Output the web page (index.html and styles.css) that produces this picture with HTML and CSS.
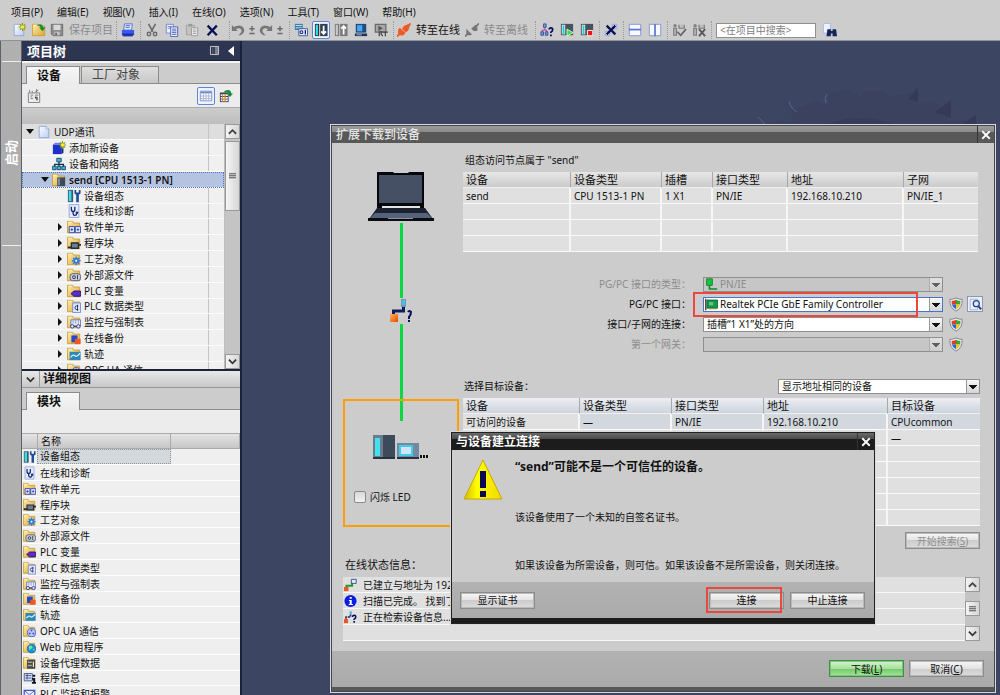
FILE: index.html
```html
<!DOCTYPE html>
<html lang="zh-CN">
<head>
<meta charset="utf-8">
<title>UDP通讯</title>
<link rel="stylesheet" href="styles.css">
</head>
<body>
<svg class="defs" aria-hidden="true">
  <defs>
    <linearGradient id="gFolder" x1="0" y1="0" x2="1" y2="1"><stop offset="0" stop-color="#ffefa8"/><stop offset="1" stop-color="#dca436"/></linearGradient>
    <linearGradient id="gPage" x1="0" y1="0" x2="1" y2="1"><stop offset="0" stop-color="#fff"/><stop offset="1" stop-color="#b9cdf5"/></linearGradient>
    <linearGradient id="gWarn" x1="0" y1="0" x2="1" y2="0"><stop offset="0" stop-color="#d8b800"/><stop offset=".35" stop-color="#ffff00"/><stop offset="1" stop-color="#f0d800"/></linearGradient>
    <linearGradient id="gOrange" x1="0" y1="0" x2="1" y2="1"><stop offset="0" stop-color="#ffb35c"/><stop offset="1" stop-color="#e84a00"/></linearGradient>
  </defs>
  <symbol id="folder" viewBox="0 0 16 16"><path d="M.500 1.500h6l1 2h7v11H.500z" fill="url(#gFolder)" stroke="#c99a3a" stroke-width="1"/><path d="M1.500 2.500h4" stroke="#fff6cc"/></symbol>
  <symbol id="page" viewBox="0 0 16 16"><path d="M2.500 1.500h8l3 3v10h-11z" fill="url(#gPage)" stroke="#8ea4d8"/><path d="M10.500 1.500v3h3" fill="#fff" stroke="#8ea4d8"/></symbol>
  <symbol id="spark" viewBox="0 0 16 16"><path d="M12 0v9M7.500 4.500h9M9 1.500l6 6M15 1.500l-6 6" stroke="#7f9a00" stroke-width="1.200"/><circle cx="12" cy="4.500" r="2" fill="#ffee22"/></symbol>
  <symbol id="box" viewBox="0 0 16 16"><path d="M1 4h10v11H1z" fill="#1c2fd0"/><path d="M1 4l3-2h9l-2 2z" fill="#6a7cf0"/><path d="M11 4l2-2v11l-2 2z" fill="#0a1878"/></symbol>
  <symbol id="net" viewBox="0 0 16 16"><path d="M8 5v4M3 11V8.500h10V11M8 8v4" stroke="#1a2f55" fill="none" stroke-width="1.500"/><path d="M5.500 1.500h5v4h-5zM.700 10.500h4v4h-4zM6 10.500h4v4H6zM11.300 10.500h4v4h-4z" fill="#2fc4d8" stroke="#1a3a66"/></symbol>
  <symbol id="plc" viewBox="0 0 16 16"><path d="M6 5h9v10H6z" fill="#3c4a5c"/><path d="M7 6h2v8H7z" fill="#8395a8"/></symbol>
  <symbol id="config" viewBox="0 0 16 16"><path d="M1 1h6v14H1z" fill="#41566c"/><path d="M2 2h3v12H2z" fill="#35e0e8"/><path d="M8.500 1v4l2 1.500V15h3V6.500l2-1.500V1h-2v3h-3V1z" fill="#1d4c98"/></symbol>
  <symbol id="steth" viewBox="0 0 16 16"><path d="M2.500.500h11v15h-11z" fill="#e3ebff" stroke="#8fa2dc"/><path d="M5 3v3q0 2.500 2 2.500T9 6V3M7 8.500V11q0 2 2 2t2-2" fill="none" stroke="#16266e" stroke-width="1.500"/><circle cx="11.300" cy="10" r="1.500" fill="#16266e"/></symbol>
  <symbol id="oUnits" viewBox="0 0 16 16"><path d="M2.500 7.500h6v7h-6zM9.500 7.500h6v7h-6z" fill="#dfe6ff" stroke="#2a3da8"/><path d="M4 11h3M5.500 9.500v3M11 11h3M12.500 9.500v3" stroke="#2a3da8"/></symbol>
  <symbol id="oBlock" viewBox="0 0 16 16"><path d="M5 8h8v6H5z" fill="#6e7f92" stroke="#222f40" stroke-width="1.500"/><path d="M1 13h4M13 10h3" stroke="#222f40" stroke-width="2"/></symbol>
  <symbol id="oGear" viewBox="0 0 16 16"><circle cx="10.500" cy="10" r="3.200" fill="#2a7be0"/><path d="M10.500 5v10M5.500 10h10M7 6.500l7 7M14 6.500l-7 7" stroke="#2a7be0" stroke-width="1.500"/><circle cx="10.500" cy="10" r="1.200" fill="#fff"/></symbol>
  <symbol id="oSrc" viewBox="0 0 16 16"><rect x="3.500" y="6.500" width="12" height="8" rx="3" fill="#c9cede" stroke="#4d566e"/><circle cx="8" cy="10.500" r="1.700" fill="none" stroke="#222b45"/><path d="M12 8v5" stroke="#222b45"/></symbol>
  <symbol id="oTag" viewBox="0 0 16 16"><path d="M4.500 11l3.500-3h7.500v6H8z" fill="#5b2fc4" stroke="#2a1170"/></symbol>
  <symbol id="oType" viewBox="0 0 16 16"><path d="M6.500 4.500h9v11h-9z" fill="#dfe7ff" stroke="#6e86c8"/><path d="M13 8q-4-1-4 2t4 2M12 6.500v7" fill="none" stroke="#24306c"/></symbol>
  <symbol id="oWatch" viewBox="0 0 16 16"><path d="M4.500 5.500h11v7h-11z" fill="#e8edff" stroke="#6274b8"/><path d="M7 6v4M10 6v4M13 6v4" stroke="#8694c8"/><circle cx="6" cy="13" r="2" fill="#dfe6ff" stroke="#28357c"/><circle cx="13" cy="13" r="2" fill="#dfe6ff" stroke="#28357c"/><path d="M8 13h3" stroke="#28357c"/></symbol>
  <symbol id="oBackup" viewBox="0 0 16 16"><path d="M5 5h7v8H5z" fill="#2646cc"/><path d="M9 9h6.500v6H9z" fill="#f0561d"/></symbol>
  <symbol id="oTrace" viewBox="0 0 16 16"><path d="M3 5.500h12.500v9.500H3z" fill="#2c86b8"/><path d="M4 12q3-4 5-2t6-3" fill="none" stroke="#e4f8ff" stroke-width="1.300"/></symbol>
  <symbol id="oOpc" viewBox="0 0 16 16"><circle cx="10.500" cy="10" r="5" fill="#bcc9ff" stroke="#3d54c8"/><circle cx="10.500" cy="7.500" r="1.200" fill="#3d54c8"/><circle cx="8.300" cy="11" r="1.200" fill="#3d54c8"/><circle cx="12.700" cy="11" r="1.200" fill="#3d54c8"/></symbol>
  <symbol id="oWeb" viewBox="0 0 16 16"><circle cx="10.500" cy="10" r="5.200" fill="#1597d4" stroke="#0c5b9c"/><path d="M7 8q2-3 4-1t-1 3-1 3q-2-1-2-5M12 11l2-1v3z" fill="#6ee0c0"/></symbol>
  <symbol id="oProxy" viewBox="0 0 16 16"><path d="M5 4h10v11H5z" fill="#3f4650"/><path d="M6.500 6h1.500v2H6.500zM9 6h1.500v2H9zM6.500 10h1.500v2H6.500zM9 10h1.500v2H9zM12 6h1.500v7H12z" fill="#f5e6a8"/></symbol>
  <symbol id="info" viewBox="0 0 16 16"><path d="M1.500 2.500h10v9h-10z" fill="#d7e0fa" stroke="#33467e"/><path d="M3 5h7M3 8h7M5 3v7" stroke="#33467e"/><path d="M12 4h3v2.500h-3zM11 8h4v5h1v2h-5v-2h1.500V10H11z" fill="#101628"/></symbol>
  <symbol id="alarm" viewBox="0 0 16 16"><path d="M1.500 3.500h13v10h-13z" fill="#e9eeff" stroke="#3b55cc" stroke-width="1.500"/><path d="M2 4l6 5 6-5" fill="none" stroke="#3b55cc"/></symbol>
  <symbol id="save" viewBox="0 0 16 16"><path d="M1.500 1.500h13v13h-11l-2-2z" fill="#8d8d8d" stroke="#696969"/><path d="M4 2h8v6H4z" fill="#d9d9d9"/><path d="M5 10h6v4H5z" fill="#c2c2c2"/><path d="M6 11h2v3H6z" fill="#666"/></symbol>
  <symbol id="print" viewBox="0 0 16 16"><path d="M4 1h9l-1 7H3z" fill="#dfe8ff" stroke="#5670c8"/><path d="M5.500 3h5M5 5h5" stroke="#4a63c4"/><path d="M1 8h14v5l-2 2H2l-1-2z" fill="#3a5ae8"/><path d="M1 12h14l-2 3H3z" fill="#1d2fae"/></symbol>
  <symbol id="cut" viewBox="0 0 16 16"><path d="M4 1l5 9M12 1L7 10" stroke="#6a6a6a" stroke-width="1.800"/><circle cx="4.500" cy="12.500" r="2" fill="none" stroke="#6a6a6a" stroke-width="1.600"/><circle cx="11.500" cy="12.500" r="2" fill="none" stroke="#6a6a6a" stroke-width="1.600"/></symbol>
  <symbol id="copy" viewBox="0 0 16 16"><path d="M1.500 1.500h8v10h-8z" fill="#eef2ff" stroke="#6a80cc"/><path d="M3 4h4M3 6h4" stroke="#6a80cc"/><path d="M6.500 4.500h8v11h-8z" fill="#eef2ff" stroke="#4159b4"/><path d="M8 7h5M8 9h5M8 11h5M8 13h5" stroke="#4159b4"/></symbol>
  <symbol id="paste" viewBox="0 0 16 16"><path d="M1.500 2.500h9v11h-9z" fill="#c2c2c2" stroke="#a0a0a0"/><path d="M4 1h4v3H4z" fill="#999"/><path d="M7.500 5.500h7v9h-7z" fill="#ececec" stroke="#969696"/><path d="M9 8h4M9 10h4M9 12h4" stroke="#999"/></symbol>
  <symbol id="del" viewBox="0 0 16 16"><path d="M3 3l10.500 11M13.500 3L3 14" stroke="#0a1058" stroke-width="2.600"/></symbol>
  <symbol id="undo" viewBox="0 0 16 16"><path d="M1 2v7h7L5.500 7q5-2.500 6.500 1 0 4-4 6h3q5-3 4-7-3-7-12-2.500z" fill="#777"/></symbol>
  <symbol id="pm" viewBox="0 0 10 16"><path d="M5 3.500v6M2 6.500h6M2 12h6" stroke="#6c6c6c" stroke-width="1.700"/></symbol>
  <symbol id="compile" viewBox="0 0 16 16"><path d="M1 1h9v7H1z" fill="#3f7fae"/><path d="M2 2.500h7v1H2zM2 5h7v1H2z" fill="#e8f4ff"/><path d="M5.500 6.500h10v8h-10z" fill="#e2ebff" stroke="#3353a0"/><circle cx="8.500" cy="10.500" r="1.600" fill="none" stroke="#14276a" stroke-width="1.200"/><path d="M13 8v5" stroke="#14276a" stroke-width="1.500"/></symbol>
  <symbol id="down" viewBox="0 0 16 16"><path d="M1 1h5v14H1z" fill="#28343f"/><path d="M2 2h2.500v12H2z" fill="#36dfe4"/><path d="M7 1h8.500v14H7z" fill="#32404d"/><path d="M11 3v9M8.300 9.500L11 12.500l2.700-3" stroke="#fff" stroke-width="2" fill="none"/></symbol>
  <symbol id="up" viewBox="0 0 16 16"><path d="M1 1h5v14H1z" fill="#777"/><path d="M2 2h2.500v12H2z" fill="#c8c8c8"/><path d="M7 1h8.500v14H7z" fill="#7a7a7a"/><path d="M11 4v9M8.300 6.500L11 3.500l2.700 3" stroke="#fff" stroke-width="2" fill="none"/></symbol>
  <symbol id="sim" viewBox="0 0 16 16"><path d="M2 1h12v10H2z" fill="#214b86"/><path d="M3.500 2.500h6v7h-6z" fill="#4aa8e8"/><path d="M1 12h14v3H1z" fill="#1f3358"/><path d="M3 13.500h6" stroke="#8fd0ff"/></symbol>
  <symbol id="rt" viewBox="0 0 16 16"><path d="M1.500 1.500h12v9h-12z" fill="#a7a7a7" stroke="#6c6c6c" stroke-width="1.500"/><path d="M5 3l5 3-5 3z" fill="#555"/><path d="M6 15v-5h3l-1 2.500L10 15M10.500 10.500H16M13 10.500V15" fill="none" stroke="#444" stroke-width="1.400"/></symbol>
  <symbol id="plug" viewBox="0 0 16 16"><path d="M0 15.500l3-3M12.500 3.500l3-3" stroke="currentColor" stroke-width="2.200"/><path d="M2 13.500q-2-5 1-8l2.500 1.500q2-4.500 6-5l1-1 2.500 2.500-1 1q0 4-4.500 6.500l-.500 1.500q-3 3-7 1z" fill="currentColor"/><path d="M5 6.500l4.500 4.500" stroke="#fff" stroke-opacity=".6"/></symbol>
  <symbol id="unplug" viewBox="0 0 16 16"><path d="M0 15.500l3-3M13 3.500l3-3" stroke="#777" stroke-width="2"/><path d="M1.500 13V6.500L8 13q-3 2-6.500 0zM7 6.500L12 2q3 2 2 7h-4z" fill="#777"/></symbol>
  <symbol id="netq" viewBox="0 0 16 16"><path d="M4 1h3v4H4zM1 10h3v4H1zM6 10h3v4H6z" fill="#2fb8cc" stroke="#5b3aa0"/><path d="M5.500 5v3M2.500 10V8h5v2" stroke="#a03ca8" fill="none"/><path d="M10.500 7.500q0-2 2-2t2 2-2 3v1M12.500 13v2" stroke="#0a1058" stroke-width="2" fill="none"/></symbol>
  <symbol id="station" viewBox="0 0 16 16"><path d="M1 1h14v13H1z" fill="#46525e"/><path d="M2 2h4v11H2z" fill="#d5e6ee"/><path d="M3 3h2v10H3z" fill="#2cc8d0"/></symbol>
  <symbol id="play" viewBox="0 0 16 16"><path d="M8 7l7 4-7 4z" fill="#2fe04a" stroke="#dfffe2"/></symbol>
  <symbol id="stop" viewBox="0 0 16 16"><path d="M8.500 8.500h6v6h-6z" fill="#f21414" stroke="#fff"/></symbol>
  <symbol id="delx" viewBox="0 0 16 16"><path d="M9.500 1.500h5v5h-5zM1.500 9.500h5v5h-5z" fill="#e5ecff" stroke="#8ba0dc"/><path d="M3 3l10 10M13 3L3 13" stroke="#0a1058" stroke-width="2.600"/></symbol>
  <symbol id="splitH" viewBox="0 0 16 16"><path d="M1.500 1.500h13v13h-13z" fill="#f7f9ff" stroke="#7b92da"/><path d="M1 7.500h14" stroke="#5d78cc" stroke-width="2"/></symbol>
  <symbol id="splitV" viewBox="0 0 16 16"><path d="M1.500 1.500h13v13h-13z" fill="#f7f9ff" stroke="#7b92da"/><path d="M8 1v14" stroke="#5d78cc" stroke-width="2"/></symbol>
  <symbol id="modGrey" viewBox="0 0 16 16"><circle cx="3.500" cy="3" r="2" fill="#858585"/><path d="M2 6h3v8H2zM8 2v4h6V2" fill="#bdbdbd" stroke="#7a7a7a" stroke-width="1.300"/></symbol>
  <symbol id="find" viewBox="0 0 16 16"><path d="M.500.500h8v11h-8z" fill="#edf2ff" stroke="#a7b7e2"/><path d="M5 7h4v8H4zM11 7h4l1 8h-5zM8 9h4v3H8z" fill="#14255e"/></symbol>
  <symbol id="grid" viewBox="0 0 16 16"><path d="M1.500 2.500h13v11h-13z" fill="#fff" stroke="#7488c4"/><path d="M2 4h12" stroke="#7488c4" stroke-width="2"/><path d="M5 5v8M8 5v8M11 5v8M2 8h12M2 11h12" stroke="#a3b0d6"/></symbol>
  <symbol id="gridGo" viewBox="0 0 16 16"><path d="M1 4h10v11H1z" fill="#34406c"/><path d="M2 6h8v2H2zM2 9h8v2H2zM2 12h8v2H2z" fill="#fff"/><path d="M4 6v8M7 6v8" stroke="#e08b1e" stroke-width="1.500"/><path d="M5 4q2-4 7-2.500 2 1 2 3.500h2l-3.500 4L9 5h2q0-2-6-1z" fill="#168a34"/></symbol>
  <symbol id="cfgGrey" viewBox="0 0 16 16"><path d="M1.500 4.500h13v11h-13z" fill="#ececec" stroke="#777"/><path d="M4 7h3M4 9h2M4 11h3M9 7h4M9 9h2v4M12 9v4M3 1v3M6 2v2M11 0v4M13 1l-4 3" stroke="#777"/></symbol>
  <symbol id="redgreen" viewBox="0 0 16 16"><path d="M3 13V9h7V4" stroke="#1b9c34" fill="none" stroke-width="2.400"/><path d="M9 1h6v5H9z" fill="#e1ebff" stroke="#243d7e"/><path d="M0 10.500h5.500v5H0z" fill="#f0551c"/></symbol>
  <symbol id="infoDot" viewBox="0 0 16 16"><circle cx="8" cy="8" r="7.500" fill="#0b1be6"/><path d="M7 3h2.500v2.300H7zM6 6.700h3.500v5H11V13H5.700v-1.300H7V8H6z" fill="#fff"/></symbol>
  <symbol id="seek" viewBox="0 0 16 16"><path d="M0 10.500h5v5H0z" fill="#f0551c"/><path d="M2.500 10V8h5.500V5" stroke="#1b2c66" fill="none" stroke-width="2" stroke-dasharray="3 1"/><path d="M7 1h2.500v4H7z" fill="#54a8d8"/><path d="M10.500 8q0-2.200 2-2.200t2 2-2 3v1M12.500 13v2" stroke="#0a1058" stroke-width="2" fill="none"/></symbol>
  <symbol id="shield" viewBox="0 0 16 16"><path d="M8 .500q4 1.800 7 1.600.600 10-7 13.400Q.400 12.100 1 2.100 4 2.300 8 .500z" fill="#e6e9eb" stroke="#777f88"/><path d="M8 2.500Q5.500 3.800 3 4l.3 4H8z" fill="#e0401c"/><path d="M8 2.500Q10.500 3.800 13 4l-.3 4H8z" fill="#3aa536"/><path d="M3.300 8H8v5.500Q4 11.500 3.300 8z" fill="#2866d4"/><path d="M12.700 8H8v5.500Q12 11.500 12.700 8z" fill="#f4c51e"/></symbol>
  <symbol id="magnify" viewBox="0 0 16 16"><path d="M1.500 1.500h9v13h-9z" fill="#edf2ff" stroke="#98aadc"/><circle cx="9" cy="7" r="3.700" fill="#d9ebff" stroke="#2c3f86" stroke-width="1.500"/><path d="M11.500 10l3.500 4" stroke="#2c3f86" stroke-width="2.400"/></symbol>
  <symbol id="pnie" viewBox="0 0 16 16"><path d="M2 1h7v8H2z" fill="#12c83a" stroke="#077a20"/><path d="M5.500 9v4.500H15" stroke="#0a8a26" stroke-width="2" fill="none"/></symbol>
  <symbol id="nic" viewBox="0 0 16 16"><path d="M1 1v14" stroke="#222" stroke-width="1.500"/><path d="M2.500 2.500h13v10h-13z" fill="#179a48" stroke="#07552a"/><path d="M5 5h5v4H5z" fill="#62c88a"/><path d="M5 13.500h9" stroke="#c3a128"/></symbol>
  <symbol id="chevU" viewBox="0 0 10 10"><path d="M1 7.500L5 3.500 9 7.500" fill="none" stroke="#444" stroke-width="2"/></symbol>
  <symbol id="chevD" viewBox="0 0 10 10"><path d="M1 3L5 7 9 3" fill="none" stroke="#333" stroke-width="2"/></symbol>
  <symbol id="close" viewBox="0 0 12 12"><path d="M1.500 1.500l9 9M10.500 1.500l-9 9" stroke="#fff" stroke-width="2.200"/></symbol>
</svg>

<div class="app">
  <header class="top">
    <nav class="menubar" aria-label="菜单">
      <button>项目(P)</button><button>编辑(E)</button><button>视图(V)</button><button>插入(I)</button><button>在线(O)</button><button>选项(N)</button><button>工具(T)</button><button>窗口(W)</button><button>帮助(H)</button>
    </nav>
    <div class="toolbar" role="toolbar" aria-label="工具栏">
      <button class="tb" aria-label="新建"><svg><use href="#page"/><use href="#spark"/></svg></button>
      <button class="tb" aria-label="打开"><svg viewBox="0 0 16 16"><use href="#folder"/><path d="M5 3q6-4 8 2h2.500L12 9.500 8 5h2q-1-3-5-2z" fill="#16902f"/></svg></button>
      <button class="tb tb-text off save"><svg><use href="#save"/></svg>保存项目</button>
      <i class="sep"></i>
      <button class="tb" aria-label="打印"><svg><use href="#print"/></svg></button>
      <i class="sep"></i>
      <button class="tb" aria-label="剪切"><svg><use href="#cut"/></svg></button>
      <button class="tb" aria-label="复制"><svg><use href="#copy"/></svg></button>
      <button class="tb" aria-label="粘贴"><svg><use href="#paste"/></svg></button>
      <button class="tb" aria-label="删除"><svg><use href="#del"/></svg></button>
      <i class="sep wide"></i>
      <button class="tb half" aria-label="撤销"><svg><use href="#undo"/></svg></button>
      <button class="tb half" aria-label="撤销列表"><svg class="pm"><use href="#pm"/></svg></button>
      <button class="tb half flip" aria-label="重做"><svg><use href="#undo"/></svg></button>
      <button class="tb half" aria-label="重做列表"><svg class="pm"><use href="#pm"/></svg></button>
      <i class="sep"></i>
      <button class="tb" aria-label="编译"><svg><use href="#compile"/></svg></button>
      <button class="tb active" aria-label="下载到设备"><svg><use href="#down"/></svg></button>
      <button class="tb" aria-label="从设备上传"><svg><use href="#up"/></svg></button>
      <button class="tb" aria-label="启动仿真"><svg><use href="#sim"/></svg></button>
      <button class="tb" aria-label="启动运行系统"><svg><use href="#rt"/></svg></button>
      <i class="sep"></i>
      <button class="tb tb-text online"><svg><use href="#plug"/></svg>转至在线</button>
      <button class="tb tb-text off offline"><svg><use href="#unplug"/></svg>转至离线</button>
      <i class="sep wide"></i>
      <button class="tb" aria-label="可访问的设备"><svg><use href="#netq"/></svg></button>
      <button class="tb" aria-label="启动 CPU"><svg><use href="#station"/><use href="#play"/></svg></button>
      <button class="tb" aria-label="停止 CPU"><svg><use href="#station"/><use href="#stop"/></svg></button>
      <i class="sep"></i>
      <button class="tb" aria-label="交叉引用"><svg><use href="#delx"/></svg></button>
      <i class="sep"></i>
      <button class="tb" aria-label="水平拆分"><svg><use href="#splitH"/></svg></button>
      <button class="tb" aria-label="垂直拆分"><svg><use href="#splitV"/></svg></button>
      <i class="sep"></i>
      <button class="tb" aria-label="接受"><svg viewBox="0 0 16 16"><use href="#modGrey"/><path d="M6 10l4 4 6-7" fill="none" stroke="#666" stroke-width="2"/></svg></button>
      <button class="tb" aria-label="取消"><svg viewBox="0 0 16 16"><use href="#modGrey"/><path d="M8 7l7 8M15 7l-7 8" stroke="#555" stroke-width="2"/></svg></button>
      <i class="sep"></i>
      <input class="search" type="text" placeholder="&lt;在项目中搜索&gt;" aria-label="在项目中搜索">
      <button class="tb" aria-label="搜索"><svg><use href="#find"/></svg></button>
    </div>
  </header>

  <div class="main">
    <div class="rail"><button class="rail-tab"><span>启动</span></button></div>

    <aside class="side">
      <div class="side-title"><h2>项目树</h2><svg class="dock" viewBox="0 0 10 10"><path d="M.500.500h9v9h-9z" fill="#7c8193" stroke="#c7cad6"/><path d="M2 1v8M4.500 1v8" stroke="#20263c" stroke-width="1.500"/></svg><svg class="fold" viewBox="0 0 6 10"><path d="M6 0v10L0 5z" fill="#fff"/></svg></div>
      <div class="tabs"><button class="tab on">设备</button><button class="tab">工厂对象</button></div>
      <div class="side-tools">
        <button class="tb first" aria-label="组态"><svg><use href="#cfgGrey"/></svg></button>
        <button class="tb active" aria-label="概览"><svg><use href="#grid"/></svg></button>
        <button class="tb" aria-label="转到"><svg><use href="#gridGo"/></svg></button>
      </div>
      <div class="blank"></div>
      <div class="tree-box">
        <ul class="tree">
          <li class="l0 root"><i class="tw open"></i><svg><use href="#page"/></svg><span>UDP通讯</span></li>
          <li class="l1"><i class="tw"></i><svg><use href="#box"/><use href="#spark"/></svg><span>添加新设备</span></li>
          <li class="l1"><i class="tw"></i><svg><use href="#net"/></svg><span>设备和网络</span></li>
          <li class="l1 sel"><i class="tw open"></i><svg><use href="#folder"/><use href="#plc"/></svg><span>send [CPU 1513-1 PN]</span></li>
          <li class="l2"><i class="tw"></i><svg><use href="#config"/></svg><span>设备组态</span></li>
          <li class="l2"><i class="tw"></i><svg><use href="#steth"/></svg><span>在线和诊断</span></li>
          <li class="l2"><i class="tw shut"></i><svg><use href="#folder"/><use href="#oUnits"/></svg><span>软件单元</span></li>
          <li class="l2"><i class="tw shut"></i><svg><use href="#folder"/><use href="#oBlock"/></svg><span>程序块</span></li>
          <li class="l2"><i class="tw shut"></i><svg><use href="#folder"/><use href="#oGear"/></svg><span>工艺对象</span></li>
          <li class="l2"><i class="tw shut"></i><svg><use href="#folder"/><use href="#oSrc"/></svg><span>外部源文件</span></li>
          <li class="l2"><i class="tw shut"></i><svg><use href="#folder"/><use href="#oTag"/></svg><span>PLC 变量</span></li>
          <li class="l2"><i class="tw shut"></i><svg><use href="#folder"/><use href="#oType"/></svg><span>PLC 数据类型</span></li>
          <li class="l2"><i class="tw shut"></i><svg><use href="#folder"/><use href="#oWatch"/></svg><span>监控与强制表</span></li>
          <li class="l2"><i class="tw shut"></i><svg><use href="#folder"/><use href="#oBackup"/></svg><span>在线备份</span></li>
          <li class="l2"><i class="tw shut"></i><svg><use href="#folder"/><use href="#oTrace"/></svg><span>轨迹</span></li>
          <li class="l2"><i class="tw shut"></i><svg><use href="#folder"/><use href="#oOpc"/></svg><span>OPC UA 通信</span></li>
        </ul>
        <div class="scroll">
          <button aria-label="向上"><svg><use href="#chevU"/></svg></button>
          <div class="thumb"><i class="grip"></i></div>
          <button class="end" aria-label="向下"><svg><use href="#chevD"/></svg></button>
        </div>
      </div>
      <div class="detail-title"><svg><use href="#chevD"/></svg><h2>详细视图</h2></div>
      <div class="tabs detail-tabs"><button class="tab on">模块</button></div>
      <div class="side-tools"></div>
      <div class="list-head"><span></span><span>名称</span><span></span></div>
      <ul class="list">
        <li class="sel"><svg><use href="#config"/></svg><span>设备组态</span></li>
        <li><svg><use href="#steth"/></svg><span>在线和诊断</span></li>
        <li><svg><use href="#folder"/><use href="#oUnits"/></svg><span>软件单元</span></li>
        <li><svg><use href="#folder"/><use href="#oBlock"/></svg><span>程序块</span></li>
        <li><svg><use href="#folder"/><use href="#oGear"/></svg><span>工艺对象</span></li>
        <li><svg><use href="#folder"/><use href="#oSrc"/></svg><span>外部源文件</span></li>
        <li><svg><use href="#folder"/><use href="#oTag"/></svg><span>PLC 变量</span></li>
        <li><svg><use href="#folder"/><use href="#oType"/></svg><span>PLC 数据类型</span></li>
        <li><svg><use href="#folder"/><use href="#oWatch"/></svg><span>监控与强制表</span></li>
        <li><svg><use href="#folder"/><use href="#oBackup"/></svg><span>在线备份</span></li>
        <li><svg><use href="#folder"/><use href="#oTrace"/></svg><span>轨迹</span></li>
        <li><svg><use href="#folder"/><use href="#oOpc"/></svg><span>OPC UA 通信</span></li>
        <li><svg><use href="#folder"/><use href="#oWeb"/></svg><span>Web 应用程序</span></li>
        <li><svg><use href="#folder"/><use href="#oProxy"/></svg><span>设备代理数据</span></li>
        <li><svg><use href="#info"/></svg><span>程序信息</span></li>
        <li><svg><use href="#alarm"/></svg><span>PLC 监控和报警</span></li>
      </ul>
    </aside>

    <main class="desk">
      <svg class="gear" viewBox="0 0 260 60" aria-hidden="true">
        <path d="M10 60L18 50 40 43 54 46 50 34 75 24 88 29 88 18 108 12 122 20 124 14 142 14 150 20 172 15 178 26 194 24 210 38 208 44 236 42 236 60z" fill="#3a425f"/>
        <path d="M64 60q55-38 115 0z" fill="#363c59"/>
        <path d="M168 22l10-12v15zM195 35l16-12v18zM218 50l18-12v16z" fill="#353b57"/>
        <path d="M18 40q6 8 14 11M49 24q1 7 8 11M87 17q-3 4-1 9" fill="none" stroke="#52658d"/>
      </svg>

      <section class="win" aria-label="扩展下载到设备">
        <div class="win-title"><h1>扩展下载到设备</h1><button class="x" aria-label="关闭"><svg><use href="#close"/></svg></button></div>
        <div class="win-body">
          <div class="topo">
            <svg class="laptop" viewBox="0 0 66 50"><path d="M9 0h16l1 1h14l1-1h15v36H9z" fill="#05070a"/><path d="M11 3h43v28H11z" fill="#465064"/><path d="M14 34h38v2H14z" fill="#dfe3ea"/><path d="M9 36h48l8 11H1z" fill="#1c222d"/><path d="M7 41h52l6 6H1z" fill="#56627a"/><path d="M0 46h66v3H0z" fill="#0a0c10"/><path d="M20 46h25v1H20z" fill="#8792a5"/></svg>
            <i class="wire"></i>
            <svg class="link" viewBox="0 0 24 24"><path d="M12 0h5v8h-5z" fill="#7c93b0"/><path d="M13 1h3v5h-3z" fill="#3cc6ea"/><path d="M14.500 8v4H4.500v3" fill="none" stroke="#101c58" stroke-width="3"/><path d="M1 15h8v8H1z" fill="url(#gOrange)"/><path d="M19 13q1-2 3 0 0 3-2 5v2M20 21v2" fill="none" stroke="#0a1058" stroke-width="2"/></svg>
            <i class="wire"></i>
            <div class="target">
              <i class="wire stub"></i>
              <svg class="devices" viewBox="0 0 56 26"><path d="M0 0h22v24H0z" fill="#3d4a5a"/><path d="M0 0h10v24H0z" fill="#6a7c90"/><path d="M2 3h5v18H2z" fill="#43e2ea"/><path d="M0 22h22v2H0zM24 22h22v2H24z" fill="#28323e"/><path d="M24 8h22v14H24z" fill="#7488a0"/><path d="M26 10h14v11H26z" fill="#3ecfe6"/><path d="M28 12h10v7H28z" fill="#d3e4ff"/><path d="M47 20h2v3h-2zM50 20h2v3h-2zM53 20h2v3h-2z" fill="#111"/></svg>
              <label class="check"><input type="checkbox">闪烁 LED</label>
            </div>
          </div>

          <div class="form-col">
            <h3>组态访问节点属于 "send"</h3>
            <table class="grid t1">
              <thead><tr><th>设备</th><th>设备类型</th><th>插槽</th><th>接口类型</th><th>地址</th><th>子网</th></tr></thead>
              <tbody>
                <tr><td>send</td><td>CPU 1513-1 PN</td><td>1 X1</td><td>PN/IE</td><td>192.168.10.210</td><td>PN/IE_1</td></tr>
                <tr><td></td><td></td><td></td><td></td><td></td><td></td></tr>
                <tr><td></td><td></td><td></td><td></td><td></td><td></td></tr>
                <tr><td></td><td></td><td></td><td></td><td></td><td></td></tr>
              </tbody>
            </table>
            <div class="fields">
              <label class="dim" for="f1">PG/PC 接口的类型：</label>
              <div class="combo dis icon"><select id="f1" disabled><option>PN/IE</option></select><svg class="lead"><use href="#pnie"/></svg></div><span></span><span></span>
              <label for="f2">PG/PC 接口：</label>
              <div class="combo icon focus"><select id="f2"><option>Realtek PCIe GbE Family Controller</option></select><svg class="lead"><use href="#nic"/></svg><i class="mark"></i></div><svg class="sh"><use href="#shield"/></svg><button class="mag" aria-label="搜索接口"><svg><use href="#magnify"/></svg></button>
              <label for="f3">接口/子网的连接：</label>
              <div class="combo"><select id="f3"><option>插槽“1 X1”处的方向</option></select></div><svg class="sh"><use href="#shield"/></svg><span></span>
              <label class="dim" for="f4">第一个网关：</label>
              <div class="combo dis"><select id="f4" disabled><option></option></select></div><svg class="sh"><use href="#shield"/></svg><span></span>
            </div>
            <div class="pick">
              <label for="f5">选择目标设备：</label>
              <div class="combo"><select id="f5"><option>显示地址相同的设备</option></select></div>
            </div>
            <table class="grid t2">
              <thead><tr><th>设备</th><th>设备类型</th><th>接口类型</th><th>地址</th><th>目标设备</th></tr></thead>
              <tbody>
                <tr class="cur"><td>可访问的设备</td><td>—</td><td>PN/IE</td><td>192.168.10.210</td><td>CPUcommon</td></tr>
                <tr><td></td><td></td><td></td><td></td><td>—</td></tr>
                <tr><td></td><td></td><td></td><td></td><td></td></tr>
                <tr><td></td><td></td><td></td><td></td><td></td></tr>
                <tr><td></td><td></td><td></td><td></td><td></td></tr>
                <tr><td></td><td></td><td></td><td></td><td></td></tr>
                <tr><td></td><td></td><td></td><td></td><td></td></tr>
              </tbody>
            </table>
            <div class="right"><button class="btn" disabled>开始搜索(<u>S</u>)</button></div>
          </div>
        </div>

        <div class="status">
          <h3>在线状态信息：</h3>
          <div class="log-box">
            <ul class="log">
              <li><svg><use href="#redgreen"/></svg>已建立与地址为 192.</li>
              <li><svg><use href="#infoDot"/></svg>扫描已完成。 找到了</li>
              <li><svg><use href="#seek"/></svg>正在检索设备信息...</li>
              <li></li>
            </ul>
            <div class="scroll">
              <button aria-label="向上"><svg><use href="#chevU"/></svg></button>
              <div class="thumb small"><i class="grip"></i></div>
              <button class="end" aria-label="向下"><svg><use href="#chevD"/></svg></button>
            </div>
          </div>
        </div>
        <footer class="win-foot"><button class="btn go">下载(<u>L</u>)</button><button class="btn">取消(<u>C</u>)</button></footer>
      </section>

      <section class="win msg" role="dialog" aria-label="与设备建立连接">
        <div class="win-title"><h1>与设备建立连接</h1><button class="x" aria-label="关闭"><svg><use href="#close"/></svg></button></div>
        <div class="msg-body">
          <svg class="warn" viewBox="0 0 40 42"><path d="M20 1L39 40H1z" fill="url(#gWarn)" stroke="#c8a800"/><path d="M17 12h6v17h-6zM17 32h6v6h-6z" fill="#0a0a50"/></svg>
          <div class="msg-text">
            <h2>“send”可能不是一个可信任的设备。</h2>
            <p>该设备使用了一个未知的自签名证书。</p>
            <p>如果该设备为所需设备，则可信。如果该设备不是所需设备，则关闭连接。</p>
          </div>
        </div>
        <footer class="msg-foot"><button class="btn cert">显示证书</button><span class="marked"><button class="btn">连接</button><i class="mark"></i></span><button class="btn">中止连接</button></footer>
      </section>
    </main>
  </div>
</div>
</body>
</html>
```
FILE: styles.css
```css
* { box-sizing: border-box; }
html, body { height: 100%; margin: 0; }
body {
  font: 10px/16px "Noto Sans", "Noto Sans CJK SC", sans-serif;
  color: #111;
  overflow: hidden;
  background: #cccccc;
}
button, input, select { font: inherit; color: inherit; margin: 0; }
button { padding: 0; border: 0; background: none; white-space: nowrap; }
h1, h2, h3, p, ul { margin: 0; padding: 0; font-size: inherit; font-weight: normal; }
ul { list-style: none; }
svg { display: block; flex: none; width: 14px; height: 14px; overflow: visible; }
.defs { position: absolute; width: 0; height: 0; }

.app { display: flex; flex-direction: column; height: 100vh; }

/* Menu and toolbar */
.top { background: #cdcdcd; border-bottom: 1px solid #8d9399; }
.menubar { display: flex; gap: 14px; height: 20px; padding: 3px 0 0 11px; }
.toolbar { display: flex; align-items: center; height: 20px; padding-left: 9px; }
.tb { display: flex; align-items: center; justify-content: center; width: 20px; height: 18px; flex: none; }
.tb svg { width: 14px; height: 14px; }
.tb svg.pm { width: 10px; }
.tb-text { width: auto; font-size: 11px; gap: 5px; }
.save { padding: 0 1px; }
.online { padding-left: 2px; }
.offline { padding-left: 5px; }
.online svg { color: #ee5a24; }
.off { color: #8a8a8a; }
.half { width: 14px; }
.flip svg { transform: scaleX(-1); }
.active { width: 18px; margin: 0 1px; border: 1px solid #5c86d6; border-radius: 2px; background: #eef3ff; }
.sep { width: 1px; height: 18px; margin: 0 1px 0 2px; border-left: 1px dotted #9c9c9c; flex: none; }
.sep.wide { margin-left: 7px; }
.search { width: 100px; height: 15px; margin: 0 4px 0 3px; padding: 0 3px; border: 1px solid #8f8f8f; background: #fff; }
.search::placeholder { color: #808080; opacity: 1; }

.main { display: flex; flex: 1; min-height: 0; }

/* Left rail */
.rail { width: 22px; padding: 20px 0 0 1px; background: #b0b0b0; border-right: 1px solid #5c6068; border-left: 1px solid #5c6068; }
.rail-tab { display: flex; align-items: center; width: 100%; height: 185px; border-top: 1px solid #eee; border-bottom: 1px solid #eee; background: #adadad; }
.rail-tab span { writing-mode: vertical-rl; text-orientation: sideways; transform: rotate(180deg); font-size: 13px; line-height: 18px; font-weight: bold; color: #fff; }

/* Side panel */
.side { display: flex; flex-direction: column; width: 220px; background: #c6c6c6; border-right: 2px solid #1c2338; }
.side-title { display: flex; align-items: center; gap: 9px; height: 20px; padding: 0 6px 0 5px; background: #2d3550; color: #fff; border-bottom: 1px solid #1c2338; }
.side-title h2 { flex: 1; font-size: 13px; font-weight: bold; }
.dock { width: 9px; height: 9px; }
.fold { width: 6px; height: 10px; }
.tabs { display: flex; align-items: flex-end; gap: 1px; height: 23px; padding-left: 4px; background: #cccccc; border-top: 2px solid #f4f4f4; border-bottom: 1px solid #8b8b8b; }
.tab { height: 17px; width: 78px; padding-right: 8px; border: 1px solid #8b8b8b; border-bottom: 0; background: linear-gradient(#dedede, #c8c8c8); font-size: 12px; line-height: 16px; color: #444; }
.tab.on { width: 54px; height: 18px; margin-bottom: -1px; background: linear-gradient(#f6f6f6, #ebebeb); font-weight: bold; color: #111; }
.side-tools { display: flex; align-items: center; height: 23px; padding: 0 4px; background: #ececec; }
.side-tools .first { margin-right: auto; margin-left: -2px; }
.side-tools .active { height: 18px; }
.blank { height: 17px; background: linear-gradient(#cccccc, #bebebe); border-top: 1px solid #aaa; }
.tree-box { display: flex; height: 245px; background: #bdbdbd; }
.tree { flex: 1; overflow: hidden; margin-right: 1px; }
.tree li { display: flex; align-items: center; height: 16px; background: linear-gradient(to left, transparent 15px, #c4c4c4 15px, #c4c4c4 16px, transparent 16px), #f0f0f0; border-bottom: 1px solid #fafafa; white-space: nowrap; }
.tree li:nth-child(6n), .list li:nth-child(5n) { height: 15px; }
.tree li span { margin-left: 3px; }
.tree li.root { background: linear-gradient(to left, transparent 15px, #c4c4c4 15px, #c4c4c4 16px, transparent 16px), #dedede; }
.tree li.sel { background: #b4c3df; outline: 1px dotted #4f74c4; outline-offset: -1px; font-weight: 600; }
.l0 { padding-left: 1px; }
.l1 { padding-left: 16px; }
.l2 { padding-left: 31px; }
.tw { width: 14px; height: 8px; flex: none; display: flex; align-items: center; justify-content: center; }
.tw.open::before { content: ""; border: 4px solid transparent; border-top: 5px solid #111; border-bottom: 0; }
.tw.shut::before { content: ""; border: 4px solid transparent; border-left: 4px solid #111; border-right: 0; }

.scroll { display: flex; flex-direction: column; width: 15px; background: #c4c4c4; flex: none; }
.scroll button, .thumb { display: flex; align-items: center; justify-content: center; height: 15px; flex: none; border: 1px solid #999; background: linear-gradient(90deg, #f4f4f4, #d6d6d6); }
.scroll svg { width: 9px; height: 9px; }
.thumb { height: 70px; margin-top: 2px; }
.thumb.small { height: 15px; margin-top: 9px; }
.grip { width: 7px; height: 6px; background: repeating-linear-gradient(#777 0 1px, #bbb 1px 2px); }
.end { margin-top: auto; }

.detail-title { display: flex; align-items: center; height: 19px; border-top: 2px solid #1c2338; border-bottom: 1px solid #999; background: linear-gradient(#e8e8e8, #c8c8c8); }
.detail-title svg { width: 9px; height: 9px; margin: 0 4px; }
.detail-title h2 { padding-left: 3px; border-left: 1px solid #999; font-size: 12px; font-weight: bold; }
.detail-tabs { height: 22px; border-top: 0; }
.list-head { display: grid; grid-template-columns: 16px 133px 1fr; height: 16px; border-top: 1px solid #aaa; border-bottom: 1px solid #aaa; background: linear-gradient(#e4e4e4, #c6c6c6); line-height: 14px; }
.list-head span { border-right: 1px solid #aaa; padding-left: 3px; }
.list { flex: 1; overflow: hidden; min-height: 0; background: #f0f0f0; }
.list li { display: flex; align-items: center; height: 16px; border-bottom: 1px solid #fcfcfc; background: #efefef; white-space: nowrap; }
.list svg { width: 13px; margin: 0 1px; }
.list span { width: 134px; padding-left: 3px; }
.list .sel span { height: 15px; line-height: 15px; background: #d3d8dc; outline: 1px dotted #8c949c; outline-offset: -1px; }

/* Desktop and windows */
.desk { position: relative; flex: 1; background: #3c4662; overflow: hidden; }
.gear { position: absolute; right: 0; top: 36px; width: 260px; height: 60px; }
.win { position: absolute; inset: 83px 4px 2px 88px; display: flex; flex-direction: column; background: #cccccc; border: 1px solid #d8d8d8; outline: 1px solid #44484e; outline-offset: -2px; padding: 1px; }
.win-title { display: flex; align-items: center; height: 17px; flex: none; padding-left: 4px; background: linear-gradient(#9c9c9c, #8a8a8a 6px, #585858 6px, #585858); }
.win-title h1 { flex: 1; font-size: 12px; font-weight: 500; color: #e4e4e4; }
.x { display: flex; align-items: center; justify-content: center; width: 17px; height: 17px; border-left: 1px solid #333; }
.x svg { width: 10px; height: 10px; }
.win-body { display: grid; grid-template-columns: 116px 1fr; column-gap: 4px; padding: 9px 14px 0 11px; }
h3 { height: 20px; padding-left: 2px; }

.topo { display: flex; flex-direction: column; align-items: center; padding-top: 20px; }
.laptop { width: 66px; height: 50px; }
.wire { width: 3px; height: 75px; margin-top: 1px; background: #0ad840; }
.wire.stub { height: 20px; margin-top: 0; }
.link { width: 24px; height: 24px; margin-top: 1px; }
.target { display: flex; flex-direction: column; align-items: center; width: 100%; height: 128px; border: 2px solid #ff9e00; }
.devices { width: 56px; height: 26px; margin-top: 14px; }
.check { display: flex; align-items: center; gap: 4px; align-self: flex-start; margin: 28px 0 0 9px; }
.check input { appearance: none; width: 12px; height: 12px; border: 1px solid #8a8a8a; border-radius: 2px; background: linear-gradient(#d8d8d8, #f4f4f4); }

.grid { width: 100%; border-collapse: separate; border-spacing: 0; table-layout: fixed; }
.grid th, .grid td { height: 16px; padding: 0 3px; line-height: 14px; text-align: left; white-space: nowrap; overflow: hidden; }
.grid th { font-weight: normal; font-size: 11px; background: linear-gradient(#e6e6e6, #cbcbcb); border-right: 1px solid #a8a8a8; border-bottom: 1px solid #f0f0f0; }
.grid td { background: #e0e0e0; border-right: 2px solid #f6f6f6; border-bottom: 1px solid #fafafa; }
.grid th:last-child, .grid td:last-child { border-right: 0; }
.t1 { width: calc(100% - 2px); }
.t1 th:nth-child(1) { width: 108px; }
.t1 th:nth-child(2) { width: 91px; }
.t1 th:nth-child(3) { width: 51px; }
.t1 th:nth-child(4) { width: 75px; }
.t1 th:nth-child(5) { width: 116px; }
.t2 th { background: linear-gradient(#eceef2, #cdd4dd); }
.t2 th:nth-child(1) { width: 117px; }
.t2 th:nth-child(2), .t2 th:nth-child(3) { width: 92px; }
.t2 th:nth-child(4) { width: 124px; }
.t2 .cur td { background: #d2d8de; }
.t2 .cur td:first-child { background: #e0e0e0; }

.fields { display: grid; grid-template-columns: 228px 240px 13px 17px; column-gap: 6px; grid-auto-rows: 20px; align-items: center; margin-top: 22px; }
.fields label { text-align: right; }
.fields .combo { margin: 0 -6px 0 6px; }
.fields .sh { height: 15px; margin-left: 6px; }
.fields .mag { margin-left: 5px; }
.dim { color: #8c8c8c; }
.combo { position: relative; height: 15px; }
.combo select { display: block; appearance: none; width: 100%; height: 15px; padding: 0 16px 0 3px; border: 1px solid #8f8f8f; border-radius: 0; background: #fff; line-height: 13px; opacity: 1; }
.combo.icon select { padding-left: 16px; }
.combo::after { content: ""; position: absolute; right: 1px; top: 1px; width: 12px; height: 13px; border-left: 1px solid #999; background: linear-gradient(#111, #111) 2px 5px / 8px 1px no-repeat, linear-gradient(#111, #111) 3px 6px / 6px 1px no-repeat, linear-gradient(#111, #111) 4px 7px / 4px 1px no-repeat, linear-gradient(#111, #111) 5px 8px / 2px 1px no-repeat, linear-gradient(#f8f8f8, #d4d4d4); pointer-events: none; }
.combo.dis select { background: #c6c6c6; color: #8c8c8c; }
.combo.dis::after { opacity: .55; }
.combo.focus select { border-color: #4a74c8; }
.lead { position: absolute; left: 2px; top: 1px; width: 13px; height: 13px; pointer-events: none; }
.mag { display: flex; align-items: center; justify-content: center; width: 16px; height: 16px; border: 1px solid #8f97ad; background: #e9eefb; }
.mag svg { width: 13px; height: 13px; }
.mark { position: absolute; border: 2px solid #e8493c; pointer-events: none; }
.combo .mark { inset: -5px 25px -5px -10px; }

.pick { display: flex; justify-content: space-between; align-items: center; height: 16px; margin: 24px 0 4px; padding-left: 1px; }
.pick .combo { width: 202px; }
.right { display: flex; justify-content: flex-end; margin-top: 6px; }
.btn { width: 75px; height: 17px; flex: none; line-height: 14px; border: 1px solid #8c8c8c; outline: 1px solid #b9b9b9; outline-offset: -2px; background: linear-gradient(#f8f8f8, #e2e2e2 50%, #cccccc 50%, #dcdcdc); color: #111; }
.btn:disabled { color: #8f8f8f; }
.btn.go { border-color: #3f8f44; outline-color: #7cc47c; background: linear-gradient(#d8f4d2, #a8e09c 50%, #6fc766 50%, #a4e69a); }

.status { padding: 8px 14px 10px 11px; }
.status h3 { font-size: 11px; }
.log-box { display: flex; height: 64px; }
.log { flex: 1; }
.log li { display: flex; align-items: center; gap: 6px; height: 16px; padding-left: 1px; background: #e0e0e0; border-bottom: 1px solid #f8f8f8; }
.log svg { width: 13px; }
.win-foot { display: flex; justify-content: flex-end; align-items: center; gap: 5px; flex: 1; min-height: 36px; padding: 0 10px 1px; background: linear-gradient(#b2b2b2, #aaaaaa); border-bottom: 4px solid #585858; }

.msg { inset: 390px auto auto 208px; width: 426px; height: 194px; outline-color: #222; }
.msg .win-title { background: linear-gradient(#6a6a6a, #4a4a4a 6px, #1c1c1c 6px, #1c1c1c); }
.msg .win-title h1 { font-weight: bold; color: #fff; }
.msg-body { display: flex; flex: 1; gap: 12px; padding: 9px 11px 0; }
.warn { width: 40px; height: 42px; }
.msg-text h2 { font-size: 12px; font-weight: bold; }
.msg-text h2 + p { margin-top: 34px; }
.msg-text p + p { margin-top: 32px; }
.msg-foot { display: flex; align-items: center; gap: 6px; height: 41px; flex: none; padding: 0 9px 0 8px; background: linear-gradient(#b2b2b2, #aaaaaa); border-bottom: 5px solid #1c1c1c; }
.cert { margin-right: auto; }
.marked { position: relative; display: flex; }
.marked .mark { inset: -5px 2px -4px -3px; }
```
